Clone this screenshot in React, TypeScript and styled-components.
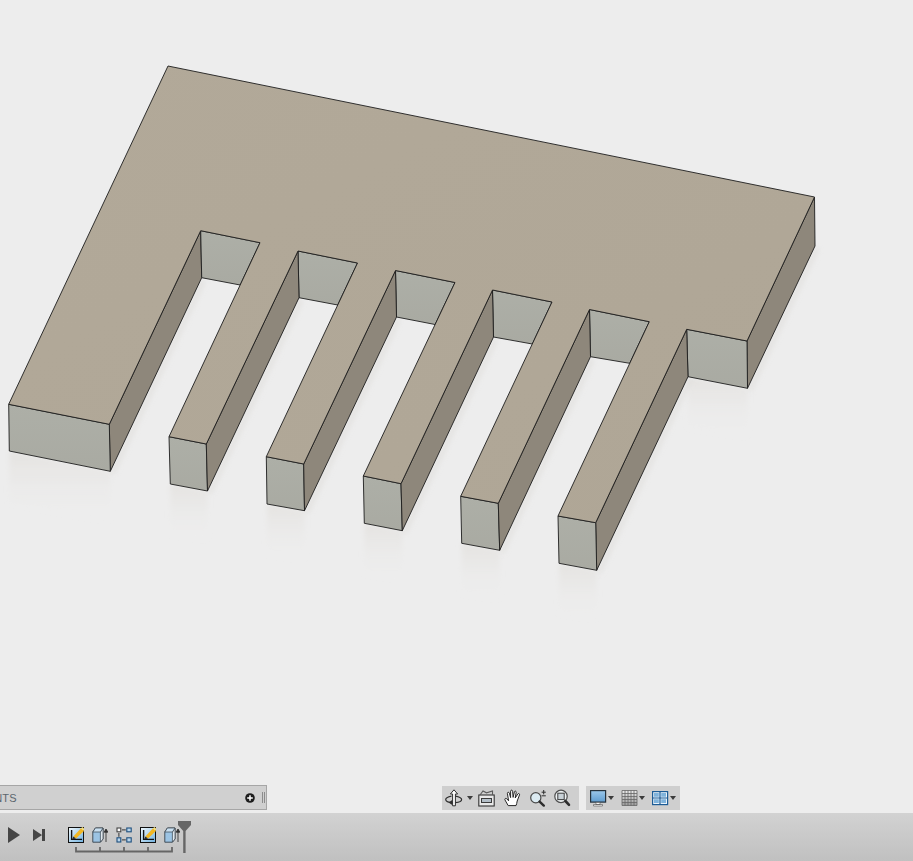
import React from "react";
import styled, { createGlobalStyle } from "styled-components";

type P = [number, number];

const GlobalStyle = createGlobalStyle`
  html, body { margin: 0; padding: 0; height: 100%; background: #ededed; overflow: hidden; }
  #root { height: 100%; }
`;

const Page = styled.div`
  width: 913px;
  height: 861px;
  display: flex;
  flex-direction: column;
  font-family: "Liberation Sans", Arial, sans-serif;
`;
const Viewport = styled.main`
  position: relative;
  height: 813px;
  flex: none;
  background: #ededed;
  overflow: hidden;
`;
const Scene = styled.svg`
  display: block;
  width: 913px;
  height: 813px;
`;
const Overlay = styled.div`
  position: absolute;
  left: 0;
  right: 0;
  bottom: 3px;
  display: flex;
  align-items: flex-end;
`;
const CommentsPanel = styled.div`
  width: 266px;
  height: 23px;
  box-sizing: content-box;
  display: flex;
  align-items: center;
  background: #d0d0d0;
  border: 1px solid #a6a6a6;
  border-left: none;
  overflow: hidden;
`;
const PanelLabel = styled.span`
  margin-left: -49px;
  flex: 1;
  font-size: 11px;
  color: #5c666e;
  letter-spacing: 0.2px;
  white-space: nowrap;
`;
const PanelAdd = styled.svg`
  display: block;
  width: 10px;
  height: 10px;
  flex: none;
`;
const Grip = styled.span`
  width: 3px;
  height: 11px;
  margin: 0 1px 0 7px;
  border-left: 1px solid #8c8c8c;
  border-right: 1px solid #8c8c8c;
  box-sizing: border-box;
`;
const NavGroup = styled.div<{ $left: number; $pad: string; $gap: number }>`
  margin-left: ${(p) => p.$left}px;
  height: 24px;
  padding: ${(p) => p.$pad};
  display: flex;
  align-items: center;
  gap: ${(p) => p.$gap}px;
  background: #cfcfcf;
`;
const ToolCell = styled.div<{ $width: number }>`
  width: ${(p) => p.$width}px;
  height: 18px;
  display: flex;
  align-items: center;
  justify-content: center;
`;
const OrbitCell = styled.div`
  width: 29px;
  height: 18px;
  display: flex;
  align-items: center;
`;
const CaretBlock = styled.div`
  height: 18px;
  display: flex;
  align-items: center;
`;
const Caret = styled.i<{ $left: number }>`
  display: block;
  flex: none;
  margin-left: ${(p) => p.$left}px;
  width: 0;
  height: 0;
  border-left: 3px solid transparent;
  border-right: 3px solid transparent;
  border-top: 4px solid #3c3c3c;
`;
const Icon18 = styled.svg`
  display: block;
  width: 18px;
  height: 18px;
  flex: none;
`;
const Timeline = styled.footer`
  height: 48px;
  flex: none;
  display: flex;
  align-items: flex-start;
  padding: 14px 0 0 8px;
  box-sizing: border-box;
  background: linear-gradient(#d2d2d2, #c0c0c0);
`;
const Transport = styled.svg<{ $width: number; $left: number }>`
  display: block;
  flex: none;
  width: ${(p) => p.$width}px;
  height: 16px;
  margin-left: ${(p) => p.$left}px;
`;
const Track = styled.div`
  position: relative;
  margin-left: 23px;
  display: flex;
  flex-direction: column;
`;
const Steps = styled.div`
  display: flex;
  gap: 8px;
`;
const StepIcon = styled.svg`
  display: block;
  width: 16px;
  height: 16px;
  flex: none;
`;
const Bracket = styled.svg`
  display: block;
  width: 100px;
  height: 8px;
  margin: 2px 0 0 7px;
`;
const Marker = styled.svg`
  position: absolute;
  left: 110px;
  top: -6px;
  width: 13px;
  height: 33px;
`;

/* ---- model geometry (screen coordinates) ---- */
const notches: { tl: P; tr: P; bl: P; br: P; toothTL: P; toothTR: P; toothBL: P; toothBR: P }[] = [
  { tl: [200.7, 230.7], tr: [260, 242.7], bl: [201.7, 277.7], br: [240.2, 285], toothTL: [169, 436.7], toothTR: [206.3, 444], toothBL: [170.3, 484], toothBR: [207.5, 491] },
  { tl: [298, 251], tr: [357.5, 263], bl: [299, 297.7], br: [337.7, 305], toothTL: [266.3, 456.7], toothTR: [303.7, 464], toothBL: [267, 504], toothBR: [304.5, 510.7] },
  { tl: [395.5, 270.5], tr: [455, 282.5], bl: [396.5, 317], br: [435.1, 324.5], toothTL: [363.3, 476], toothTR: [401, 483.7], toothBL: [364.3, 523.3], toothBR: [402.3, 530.7] },
  { tl: [492.5, 290], tr: [552, 302], bl: [493.5, 337], br: [532.3, 344], toothTL: [460.7, 496.3], toothTR: [498.3, 503.3], toothBL: [461.7, 543.3], toothBR: [499.7, 550.3] },
  { tl: [589.5, 309.5], tr: [649.3, 321.7], bl: [590.5, 356.7], br: [629.7, 363.3], toothTL: [558, 516], toothTR: [595.7, 522.7], toothBL: [559, 563.3], toothBR: [596.7, 570.3] },
];

const topFace: P[] = [
  [168, 66], [814.5, 197], [747, 341], [686.7, 329.3],
  ...[...notches].reverse().flatMap((n): P[] => [n.toothTR, n.toothTL, n.tr, n.tl]),
  [109.3, 424.3], [8.7, 404.3],
];

const pts = (list: P[]) => list.map((p) => p.join(",")).join(" ");
const down = (p: P, d: number): P => [p[0], p[1] + d];
const shift = (p: P): P => [p[0] + 4, p[1] + 4];
const wallShadow = (a: P, b: P) => pts([a, b, shift(b), shift(a)]);

const Model = () => (
  <Scene viewBox="0 0 913 813">
    <defs>
      <linearGradient id="topGrad" x1="0" y1="0" x2="1" y2="1">
        <stop offset="0" stopColor="#b2a999" />
        <stop offset="1" stopColor="#afa696" />
      </linearGradient>
      <linearGradient id="frontGrad" x1="0" y1="0" x2="0" y2="1">
        <stop offset="0" stopColor="#adafa7" />
        <stop offset="1" stopColor="#a9aaa2" />
      </linearGradient>
      <linearGradient id="reflect" x1="0" y1="0" x2="0" y2="1">
        <stop offset="0" stopColor="#e3e1de" stopOpacity="0.85" />
        <stop offset="1" stopColor="#ededed" stopOpacity="0" />
      </linearGradient>
      <filter id="soft" x="-20%" y="-20%" width="140%" height="140%">
        <feGaussianBlur stdDeviation="2.5" />
      </filter>
    </defs>

    <g filter="url(#soft)">
      {notches.map((n, i) => (
        <polygon key={i} fill="url(#reflect)" points={pts([n.toothBL, n.toothBR, down(n.toothBR, 50), down(n.toothBL, 50)])} />
      ))}
      <polygon fill="url(#reflect)" points={pts([[9.3, 451], [110.3, 471.3], [110.3, 522], [9.3, 502]])} />
      <polygon fill="url(#reflect)" points={pts([[688, 376.7], [747.5, 388.3], [747.5, 438], [688, 427]])} />
    </g>
    <g filter="url(#soft)" fill="#dddbd8" opacity="0.55">
      <polygon points={wallShadow([815, 246], [747.5, 388.3])} />
      <polygon points={wallShadow([688, 376.7], [596.7, 570.3])} />
      {notches.slice(1).map((n, i) => (
        <polygon key={i} points={wallShadow(n.bl, notches[i].toothBR)} />
      ))}
      <polygon points={wallShadow([201.7, 277.7], [110.3, 471.3])} />
    </g>

    <g stroke="#1d1d1d" strokeWidth="0.9" strokeLinejoin="round">
      <polygon fill="#8e877b" points={pts([[814.5, 197], [815, 246], [747.5, 388.3], [747, 341]])} />
      <polygon fill="url(#frontGrad)" points={pts([[686.7, 329.3], [747, 341], [747.5, 388.3], [688, 376.7]])} />
      <polygon fill="#8e877b" points={pts([[686.7, 329.3], [688, 376.7], [596.7, 570.3], [595.7, 522.7]])} />
      <polygon fill="#8e877b" points={pts([[200.7, 230.7], [201.7, 277.7], [110.3, 471.3], [109.3, 424.3]])} />
      <polygon fill="url(#frontGrad)" points={pts([[8.7, 404.3], [109.3, 424.3], [110.3, 471.3], [9.3, 451]])} />
      {notches.map((n, i) => (
        <g key={i}>
          <polygon fill="url(#frontGrad)" points={pts([n.tl, n.tr, n.br, n.bl])} />
          <polygon fill="url(#frontGrad)" points={pts([n.toothTL, n.toothTR, n.toothBR, n.toothBL])} />
        </g>
      ))}
      {notches.slice(1).map((n, i) => (
        <polygon key={i} fill="#8e877b" points={pts([n.tl, n.bl, notches[i].toothBR, notches[i].toothTR])} />
      ))}
      <polygon fill="url(#topGrad)" points={pts(topFace)} />
    </g>
  </Scene>
);

/* ---- navigation bar icons ---- */
const OrbitIcon = () => (
  <Icon18 viewBox="0 0 18 18">
    <path d="M6.5 7.2 C2.6 8 .7 9.3 .7 10.6 C.7 12.4 4 13.6 8 13.8" fill="none" stroke="#2e2e2e" strokeWidth="1.2" />
    <path d="M3.6 13.4 L7.2 11 V16 Z" fill="#2e2e2e" />
    <path d="M9 .8 L5.4 5 H7.6 V16.8 H10.4 V5 H12.6 Z" fill="#fff" stroke="#2e2e2e" strokeWidth="1" strokeLinejoin="round" />
    <path d="M10.4 7.2 C14.6 8 16.6 9.3 16.6 10.6 C16.6 12.2 14 13.4 10.4 13.7" fill="none" stroke="#2e2e2e" strokeWidth="1.2" />
  </Icon18>
);
const LookAtIcon = () => (
  <Icon18 viewBox="0 0 18 18">
    <rect x=".8" y="6" width="15.4" height="11" fill="#e8e8e8" stroke="#333" strokeWidth="1.1" />
    <path d="M2 6 L5 2 L8.5 3.8 L14.5 2 L14.5 6" fill="none" stroke="#5a5a5a" strokeWidth="1.1" />
    <rect x="3.5" y="9.5" width="10" height="4" fill="#b3bec7" stroke="#3a3a3a" strokeWidth="1" />
  </Icon18>
);
const HandIcon = () => (
  <Icon18 viewBox="0 0 18 18">
    <path
      d="M4.2 16.6 L.9 10.8 C.4 9.7 1.8 8.8 2.7 9.7 L4.6 11.8 L3.4 4.4 C3.3 3 5 2.8 5.4 4.2 L6.6 8.6 L6.6 2.2 C6.6 .8 8.5 .8 8.6 2.2 L9.1 8.4 L10.4 2.9 C10.7 1.6 12.4 2 12.2 3.3 L11.2 9 L13.8 5 C14.5 4 16 4.6 15.5 5.9 L13.2 12 C12.8 14 12.6 15.4 12 16.6 Z"
      fill="#fff"
      stroke="#262626"
      strokeWidth="1"
      strokeLinejoin="round"
    />
  </Icon18>
);
const ZoomIcon = () => (
  <Icon18 viewBox="0 0 18 18">
    <circle cx="5.8" cy="8.8" r="5.1" fill="#dcebf2" stroke="#4a4a4a" strokeWidth="1.2" />
    <path d="M9.6 12.6 L13.8 16.6" stroke="#2e2e2e" strokeWidth="2.4" strokeLinecap="round" />
    <path d="M11.6 3.2 H15.8 M13.7 1 V5.4 M11.6 6.8 H15.8" stroke="#2e2e2e" strokeWidth="1" fill="none" />
  </Icon18>
);
const FitIcon = () => (
  <Icon18 viewBox="0 0 18 18">
    <circle cx="7" cy="7.4" r="6.2" fill="#eef2f3" stroke="#4e4e4e" strokeWidth="1.2" />
    <rect x="3.8" y="4.2" width="6.4" height="6.4" fill="#c9d2d7" stroke="#3c3c3c" strokeWidth="1" />
    <path d="M11.4 12 L15 15.8" stroke="#2e2e2e" strokeWidth="2.6" strokeLinecap="round" />
  </Icon18>
);
const DisplayIcon = () => (
  <Icon18 viewBox="0 0 18 18">
    <defs>
      <linearGradient id="screenGrad" x1="0" y1="0" x2="0" y2="1">
        <stop offset="0" stopColor="#9cc8ea" />
        <stop offset="1" stopColor="#5f9ccf" />
      </linearGradient>
    </defs>
    <rect x=".6" y="1.6" width="15" height="11.5" fill="url(#screenGrad)" stroke="#26323c" strokeWidth="1.2" />
    <path d="M6 13.5 H10 V15.5 H6 Z M3.5 15.5 H12.5 V17 H3.5 Z" fill="#f6f6f6" stroke="#555" strokeWidth="0.6" />
  </Icon18>
);
const GridIcon = () => {
  const lines = [1, 4, 7, 10, 13, 16];
  return (
    <Icon18 viewBox="0 0 18 18">
      <defs>
        <linearGradient id="gridGrad" x1="0" y1="0" x2="0" y2="1">
          <stop offset="0" stopColor="#ececec" />
          <stop offset="1" stopColor="#9a9a9a" />
        </linearGradient>
      </defs>
      <rect x="1" y="1.5" width="15" height="15" fill="url(#gridGrad)" />
      {lines.map((v) => (
        <path key={v} d={`M${v} 1.5 V16.5 M1 ${v + 0.5} H16`} stroke="#666" strokeWidth="0.8" />
      ))}
    </Icon18>
  );
};
const ViewsIcon = () => (
  <Icon18 viewBox="0 0 18 18">
    <rect x=".6" y="2.6" width="15" height="13" fill="#eaf3fa" stroke="#1d5c96" strokeWidth="1.2" />
    <path d="M8 2.6 V15.6 M.6 9 H15.6" stroke="#1d5c96" strokeWidth="1.2" />
    <path d="M2 4 H6.8 V7.8 H2 Z M9.2 4 H14 V7.8 H9.2 Z M2 10.2 H6.8 V14 H2 Z M9.2 10.2 H14 V14 H9.2 Z" fill="#7fb3dc" />
  </Icon18>
);

/* ---- timeline icons ---- */
const SketchStep = () => (
  <StepIcon viewBox="0 0 16 16">
    <defs>
      <linearGradient id="sketchGrad" x1="0" y1="0" x2="1" y2="1">
        <stop offset="0" stopColor="#f4fafd" />
        <stop offset="1" stopColor="#6fb1e0" />
      </linearGradient>
    </defs>
    <rect x=".5" y=".5" width="15" height="15" fill="url(#sketchGrad)" stroke="#111" strokeWidth="1" />
    <path d="M3.6 3 V12.4 H14" fill="none" stroke="#111" strokeWidth="1.4" />
    <path d="M5.4 9.6 L13 1.2 L16 4 L8 11.6 Z" fill="#f3b722" />
    <path d="M5.4 9.6 L8 11.6 L4.2 12.6 Z" fill="#2a2a2a" />
    <path d="M13 1.2 L14.4 0 L16 1.4 L16 4 Z" fill="#f7e07c" />
  </StepIcon>
);
const ExtrudeStep = () => (
  <StepIcon viewBox="0 0 16 16">
    <path d="M.8 5 L3.4 1 H11 L11 12 L8.4 15.2 H.8 Z" fill="#9cc4e4" stroke="#37424c" strokeWidth="0.9" strokeLinejoin="round" />
    <path d="M8.4 5 L11 1 V12 L8.4 15.2 Z" fill="#e0e8ee" stroke="#37424c" strokeWidth="0.7" />
    <path d="M.8 5 H8.4 L11 1 H3.4 Z" fill="#c9dff0" stroke="#37424c" strokeWidth="0.7" />
    <path d="M14 15 V3 M12.2 5.2 L14 2 L15.8 5.2 Z" fill="#333" stroke="#333" strokeWidth="0.9" />
  </StepIcon>
);
const PatternStep = () => (
  <StepIcon viewBox="0 0 16 16">
    <g fill="#b9d6ec" stroke="#1d4f7e" strokeWidth="1.1">
      <rect x="1" y="1" width="3.8" height="3.8" fill="#fff" stroke="#444" />
      <rect x="10.8" y="1" width="4.4" height="3.8" />
      <rect x="1" y="10.8" width="3.8" height="4.2" />
      <rect x="10.8" y="10.8" width="4.4" height="4.2" />
    </g>
    <path d="M6 2.9 H9.8 M6 12.9 H9.8 M2.9 6 V9.8" stroke="#333" strokeWidth="1" />
  </StepIcon>
);

export default function App() {
  return (
    <Page>
      <GlobalStyle />
      <Viewport>
        <Model />
        <Overlay>
          <CommentsPanel>
            <PanelLabel>COMMENTS</PanelLabel>
            <PanelAdd viewBox="0 0 10 10">
              <circle cx="5" cy="5" r="4.8" fill="#1c1c1c" />
              <path d="M5 2.2 V7.8 M2.2 5 H7.8" stroke="#fff" strokeWidth="1.5" />
            </PanelAdd>
            <Grip />
          </CommentsPanel>
          <NavGroup $left={175} $pad="0 5px 0 3px" $gap={0}>
            <OrbitCell>
              <OrbitIcon />
              <Caret $left={4} />
            </OrbitCell>
            <ToolCell $width={26}><LookAtIcon /></ToolCell>
            <ToolCell $width={26}><HandIcon /></ToolCell>
            <ToolCell $width={26}><ZoomIcon /></ToolCell>
            <ToolCell $width={22}><FitIcon /></ToolCell>
          </NavGroup>
          <NavGroup $left={7} $pad="0 4px 0 4px" $gap={7}>
            <CaretBlock><DisplayIcon /><Caret $left={0} /></CaretBlock>
            <CaretBlock><GridIcon /><Caret $left={0} /></CaretBlock>
            <CaretBlock><ViewsIcon /><Caret $left={0} /></CaretBlock>
          </NavGroup>
        </Overlay>
      </Viewport>
      <Timeline>
        <Transport $width={12} $left={0} viewBox="0 0 12 16">
          <path d="M0 0 L12 8 L0 16 Z" fill="#454545" />
        </Transport>
        <Transport $width={12} $left={13} viewBox="0 0 12 16">
          <path d="M0 2 L9 8 L0 14 Z M9 2 H12 V14 H9 Z" fill="#454545" />
        </Transport>
        <Track>
          <Steps>
            <SketchStep />
            <ExtrudeStep />
            <PatternStep />
            <SketchStep />
            <ExtrudeStep />
          </Steps>
          <Bracket viewBox="0 0 100 8">
            <path d="M1 2 V6.5 H97 V2 M25 2 V6 M49 2 V6 M73 2 V6" fill="none" stroke="#666" strokeWidth="1.8" />
          </Bracket>
          <Marker viewBox="0 0 13 33">
            <path d="M0 0 H13 V4 L7.6 10 V32 H5.2 V10 L0 4 Z" fill="#666" />
          </Marker>
        </Track>
      </Timeline>
    </Page>
  );
}
